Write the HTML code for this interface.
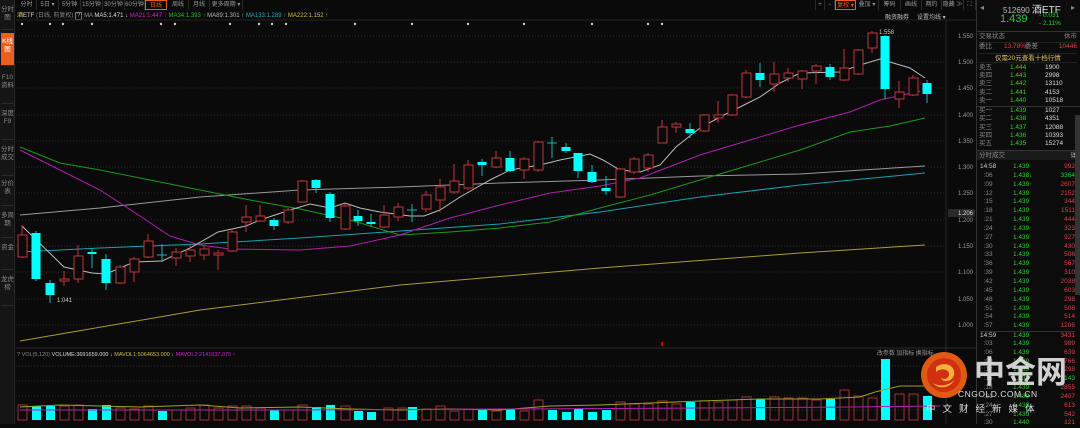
<!DOCTYPE html>
<html><head><meta charset="utf-8"><style>
*{margin:0;padding:0;box-sizing:border-box}
body{width:1080px;height:424px;background:#0a0a0a;overflow:hidden;position:relative;font-family:"Liberation Sans","Noto Sans CJK SC",sans-serif;color:#aaa}
.a{position:absolute;white-space:nowrap}
.t{font-size:6px}
.side{position:absolute;left:0;top:0;width:15px;height:424px;background:#151515;border-right:1px solid #2a2a2a}
.side div{position:absolute;left:1px;width:13px;font-size:6.5px;line-height:8px;text-align:center;color:#888;border-bottom:1px solid #2a2a2a;white-space:normal;word-break:break-all}
.tab{position:absolute;top:0;height:10px;font-size:6px;line-height:10px;color:#999;text-align:center;border-right:1px solid #2a2a2a}
.rp{position:absolute;left:976px;top:0;width:104px;height:424px;background:#0c0c0c;border-left:1px solid #333}
.row{position:absolute;left:2px;width:98px;font-size:6.5px;height:8px;line-height:8px}
.row span{position:absolute}
</style></head><body>
<div class="side">
<div style="top:2px;height:28px;padding-top:4px">分时图</div>
<div style="top:33px;height:33px;background:#e8601c;color:#fff;padding-top:5px">K线图</div>
<div style="top:70px;height:34px;padding-top:4px">F10资料</div>
<div style="top:106px;height:34px;padding-top:4px">深度F9</div>
<div style="top:142px;height:34px;padding-top:4px">分时成交</div>
<div style="top:176px;height:30px;padding-top:4px">分价表</div>
<div style="top:208px;height:30px;padding-top:4px">多周期</div>
<div style="top:240px;height:30px;padding-top:4px">资金</div>
<div style="top:272px;height:34px;padding-top:4px">龙虎榜</div>
</div>
<div class="tab" style="left:17px;width:20px">分时</div>
<div class="tab" style="left:37px;width:22px">5日 ▾</div>
<div class="tab" style="left:59px;width:22px">5分钟</div>
<div class="tab" style="left:81px;width:22px">15分钟</div>
<div class="tab" style="left:103px;width:22px">30分钟</div>
<div class="tab" style="left:125px;width:20px">60分钟</div>
<div class="tab" style="left:145px;width:22px;border:1px solid #e8601c;color:#e8601c">日线</div>
<div class="tab" style="left:168px;width:21px">周线</div>
<div class="tab" style="left:189px;width:21px">月线</div>
<div class="tab" style="left:210px;width:33px">更多周期 ▾</div>
<div class="tab" style="left:815px;width:10px;border-left:1px solid #2a2a2a">+</div>
<div class="tab" style="left:825px;width:10px">−</div>
<div class="tab" style="left:835px;width:21px;border:1px solid #e8601c;color:#e8601c">复权 ▾</div>
<div class="tab" style="left:856px;width:23px">叠加 ▾</div>
<div class="tab" style="left:879px;width:22px">筹码</div>
<div class="tab" style="left:901px;width:21px">画线</div>
<div class="tab" style="left:922px;width:20px">两约</div>
<div class="tab" style="left:942px;width:22px">隐藏 ≫</div>
<div class="tab" style="left:964px;width:12px">⛶</div>
<div class="a t" style="left:17px;top:12px;line-height:8px"><span style="color:#e0c060">酒</span><span style="color:#ddd">ETF</span> <span style="color:#888">(日线, 前复权)</span> <span style="border:1px solid #777;padding:0 1px">?</span> <span style="color:#999">MA</span> <span style="color:#ddd">MA5:1.471 ↓</span> <span style="color:#d020d0">MA21:1.447 ↑</span> <span style="color:#20c020">MA34:1.393 ↑</span> <span style="color:#bbb">MA89:1.301 ↑</span> <span style="color:#20b0c0">MA133:1.289 ↑</span> <span style="color:#d0c040">MA222:1.152 ↑</span></div>
<div class="a t" style="left:885px;top:12px;color:#bbb">融资融券</div>
<div class="a t" style="left:917px;top:12px;color:#bbb">设置均线 ▾</div>

<svg class="a" style="left:0;top:0" width="976" height="424">
<g stroke="#2c2c2c" stroke-dasharray="1 2" stroke-width="1">
<line x1="16" x2="945" y1="36" y2="36"/><line x1="16" x2="945" y1="62" y2="62"/><line x1="16" x2="945" y1="88" y2="88"/><line x1="16" x2="945" y1="115" y2="115"/><line x1="16" x2="945" y1="141" y2="141"/><line x1="16" x2="945" y1="167" y2="167"/><line x1="16" x2="945" y1="193" y2="193"/><line x1="16" x2="945" y1="220" y2="220"/><line x1="16" x2="945" y1="246" y2="246"/><line x1="16" x2="945" y1="272" y2="272"/><line x1="16" x2="945" y1="299" y2="299"/><line x1="16" x2="945" y1="325" y2="325"/>
<line x1="16" x2="945" y1="366" y2="366"/><line x1="16" x2="945" y1="381" y2="381"/><line x1="16" x2="945" y1="396" y2="396"/><line x1="16" x2="945" y1="410" y2="410"/>
</g>
<line x1="946" y1="20" x2="946" y2="424" stroke="#2a2a2a"/>
<line x1="16" y1="348" x2="976" y2="348" stroke="#2a2a2a"/>
<line x1="16" y1="20" x2="976" y2="20" stroke="#222"/>
<g fill="#ccc">
<circle cx="22" cy="24" r="1.2"/><circle cx="50" cy="24" r="1.2"/><circle cx="63" cy="24" r="1.2"/><circle cx="92" cy="24" r="1.2"/><circle cx="161" cy="24" r="1.2"/><circle cx="175" cy="24" r="1.2"/><circle cx="230" cy="24" r="1.2"/><circle cx="259" cy="24" r="1.2"/><circle cx="272" cy="24" r="1.2"/><circle cx="286" cy="24" r="1.2"/><circle cx="355" cy="24" r="1.2"/><circle cx="412" cy="24" r="1.2"/><circle cx="468" cy="24" r="1.2"/><circle cx="524" cy="24" r="1.2"/><circle cx="592" cy="24" r="1.2"/><circle cx="648" cy="24" r="1.2"/><circle cx="662" cy="24" r="1.2"/>
</g>
<g fill="none" stroke-width="1">
<polyline stroke="#d0c040" opacity=".8" points="20,341 200,310 400,285 600,268 800,253 925,245"/>
<polyline stroke="#18a0b0" points="20,252 100,248 200,244 300,238 400,231 500,224 600,212 700,197 800,185 925,173"/>
<polyline stroke="#999" points="20,215 100,208 200,197 300,190 400,187 500,183 600,180 700,176 800,174 925,166"/>
<polyline stroke="#1a9a1a" points="20,147 60,163 100,170 150,180 200,190 250,200 300,209 350,220 400,235 450,232 500,228 550,222 600,208 650,195 700,180 750,165 800,150 850,132 890,126 925,118"/>
<polyline stroke="#b020b0" points="20,150 60,170 100,190 140,216 170,236 200,245 230,249 300,250 350,246 400,235 450,218 500,205 550,193 600,186 640,178 700,155 750,140 800,125 850,112 880,100 920,91"/>
<polyline stroke="#bbb" points="22,226 64,267 92,273 106,274 134,262 162,261 190,248 218,232 246,226 260,220 290,210 310,204 330,208 345,203 360,208 380,212 410,216 424,216 440,210 460,197 490,180 510,170 540,165 560,160 590,154 603,160 620,170 640,172 660,165 676,147 700,128 720,117 740,107 760,97 780,83 800,73 840,72 860,65 880,59 900,65 910,68 925,78"/>
</g>
<g stroke="#c03838" fill="#0a0a0a">
<line x1="22" y1="225" x2="22" y2="258"/><rect x="18" y="235" width="9" height="22"/>
<line x1="64" y1="271" x2="64" y2="286"/><rect x="60" y="279" width="9" height="2"/>
<line x1="78" y1="245" x2="78" y2="283"/><rect x="74" y="256" width="9" height="23"/>
<line x1="120" y1="265" x2="120" y2="284"/><rect x="116" y="267" width="9" height="16"/>
<line x1="134" y1="257" x2="134" y2="282"/><rect x="130" y="259" width="9" height="13"/>
<line x1="148" y1="234" x2="148" y2="258"/><rect x="144" y="241" width="9" height="16"/>
<line x1="176" y1="248" x2="176" y2="266"/><rect x="172" y="252" width="9" height="6"/>
<line x1="190" y1="245" x2="190" y2="262"/><rect x="186" y="250" width="9" height="6"/>
<line x1="204" y1="246" x2="204" y2="260"/><rect x="200" y="249" width="9" height="6"/>
<line x1="218" y1="250" x2="218" y2="270"/><rect x="214" y="253" width="9" height="2"/>
<line x1="232" y1="229" x2="232" y2="252"/><rect x="228" y="232" width="9" height="19"/>
<line x1="246" y1="205" x2="246" y2="232"/><rect x="242" y="217" width="9" height="5"/>
<line x1="260" y1="205" x2="260" y2="222"/><rect x="256" y="216" width="9" height="5"/>
<line x1="288" y1="208" x2="288" y2="224"/><rect x="284" y="210" width="9" height="12"/>
<line x1="302" y1="180" x2="302" y2="202"/><rect x="298" y="181" width="9" height="21"/>
<line x1="345" y1="204" x2="345" y2="230"/><rect x="341" y="206" width="9" height="23"/>
<line x1="384" y1="205" x2="384" y2="228"/><rect x="380" y="215" width="9" height="12"/>
<line x1="398" y1="203" x2="398" y2="221"/><rect x="394" y="207" width="9" height="10"/>
<line x1="426" y1="191" x2="426" y2="212"/><rect x="422" y="195" width="9" height="14"/>
<line x1="440" y1="179" x2="440" y2="212"/><rect x="436" y="187" width="9" height="13"/>
<line x1="454" y1="164" x2="454" y2="194"/><rect x="450" y="181" width="9" height="11"/>
<line x1="468" y1="160" x2="468" y2="190"/><rect x="464" y="165" width="9" height="23"/>
<line x1="496" y1="151" x2="496" y2="168"/><rect x="492" y="158" width="9" height="9"/>
<line x1="524" y1="157" x2="524" y2="179"/><rect x="520" y="159" width="9" height="11"/>
<line x1="538" y1="141" x2="538" y2="172"/><rect x="534" y="142" width="9" height="28"/>
<line x1="620" y1="168" x2="620" y2="198"/><rect x="616" y="169" width="9" height="28"/>
<line x1="634" y1="157" x2="634" y2="174"/><rect x="630" y="159" width="9" height="13"/>
<line x1="648" y1="153" x2="648" y2="172"/><rect x="644" y="155" width="9" height="13"/>
<line x1="662" y1="120" x2="662" y2="143"/><rect x="658" y="127" width="9" height="16"/>
<line x1="676" y1="122" x2="676" y2="133"/><rect x="672" y="124" width="9" height="3"/>
<line x1="704" y1="114" x2="704" y2="132"/><rect x="700" y="115" width="9" height="16"/>
<line x1="718" y1="101" x2="718" y2="123"/><rect x="714" y="115" width="9" height="3"/>
<line x1="732" y1="94" x2="732" y2="116"/><rect x="728" y="95" width="9" height="20"/>
<line x1="746" y1="70" x2="746" y2="98"/><rect x="742" y="73" width="9" height="24"/>
<line x1="774" y1="62" x2="774" y2="92"/><rect x="770" y="74" width="9" height="10"/>
<line x1="788" y1="68" x2="788" y2="82"/><rect x="784" y="73" width="9" height="5"/>
<line x1="802" y1="70" x2="802" y2="89"/><rect x="798" y="71" width="9" height="8"/>
<line x1="816" y1="64" x2="816" y2="84"/><rect x="812" y="66" width="9" height="5"/>
<line x1="844" y1="49" x2="844" y2="81"/><rect x="840" y="68" width="9" height="12"/>
<line x1="858" y1="49" x2="858" y2="75"/><rect x="854" y="50" width="9" height="24"/>
<line x1="872" y1="31" x2="872" y2="53"/><rect x="868" y="33" width="9" height="15"/>
<line x1="899" y1="81" x2="899" y2="108"/><rect x="895" y="92" width="9" height="7"/>
<line x1="913" y1="75" x2="913" y2="96"/><rect x="909" y="78" width="9" height="17"/>
</g>
<g stroke="#10b8b8" fill="#00ffff">
<line x1="36" y1="231" x2="36" y2="281"/><rect x="31.5" y="233" width="9" height="46" stroke="none"/>
<line x1="50" y1="280" x2="50" y2="303"/><rect x="45.5" y="283" width="9" height="12" stroke="none"/>
<line x1="92" y1="248" x2="92" y2="268"/><rect x="87.5" y="252" width="9" height="2" stroke="none"/>
<line x1="106" y1="254" x2="106" y2="290"/><rect x="101.5" y="259" width="9" height="24" stroke="none"/>
<line x1="162" y1="244" x2="162" y2="262"/><line x1="157" y1="255" x2="167" y2="255"/>
<line x1="274" y1="218" x2="274" y2="230"/><rect x="269.5" y="220" width="9" height="6" stroke="none"/>
<line x1="316" y1="179" x2="316" y2="193"/><rect x="311.5" y="180" width="9" height="8" stroke="none"/>
<line x1="330" y1="192" x2="330" y2="222"/><rect x="325.5" y="194" width="9" height="24" stroke="none"/>
<line x1="358" y1="210" x2="358" y2="226"/><rect x="353.5" y="216" width="9" height="5" stroke="none"/>
<line x1="371" y1="214" x2="371" y2="227"/><rect x="366.5" y="222" width="9" height="2" stroke="none"/>
<line x1="412" y1="204" x2="412" y2="222"/><line x1="407" y1="210" x2="417" y2="210"/>
<line x1="482" y1="159" x2="482" y2="176"/><rect x="477.5" y="162" width="9" height="3" stroke="none"/>
<line x1="510" y1="151" x2="510" y2="172"/><rect x="505.5" y="158" width="9" height="13" stroke="none"/>
<line x1="552" y1="137" x2="552" y2="158"/><line x1="547" y1="143" x2="557" y2="143"/>
<line x1="566" y1="143" x2="566" y2="153"/><rect x="561.5" y="147" width="9" height="4" stroke="none"/>
<line x1="578" y1="153" x2="578" y2="178"/><rect x="573.5" y="153" width="9" height="18" stroke="none"/>
<line x1="592" y1="165" x2="592" y2="183"/><rect x="587.5" y="172" width="9" height="10" stroke="none"/>
<line x1="606" y1="176" x2="606" y2="195"/><rect x="601.5" y="188" width="9" height="3" stroke="none"/>
<line x1="690" y1="123" x2="690" y2="138"/><rect x="685.5" y="129" width="9" height="4" stroke="none"/>
<line x1="760" y1="63" x2="760" y2="87"/><rect x="755.5" y="73" width="9" height="7" stroke="none"/>
<line x1="830" y1="64" x2="830" y2="80"/><rect x="825.5" y="67" width="9" height="10" stroke="none"/>
<line x1="885" y1="35" x2="885" y2="99"/><rect x="880.5" y="36" width="9" height="53" stroke="none"/>
<line x1="927" y1="80" x2="927" y2="103"/><rect x="922.5" y="83" width="9" height="11" stroke="none"/>
</g>
<text x="57" y="302" fill="#ccc" font-size="6" font-family="Liberation Sans">1.041</text>
<text x="879" y="34" fill="#ccc" font-size="6" font-family="Liberation Sans">1.558</text>
<g fill="#999" font-size="6" font-family="Liberation Sans">
<text x="958" y="38">1.550</text><text x="958" y="64">1.500</text><text x="958" y="90">1.450</text><text x="958" y="117">1.400</text><text x="958" y="143">1.350</text><text x="958" y="169">1.300</text><text x="958" y="195">1.250</text><text x="958" y="222">1.200</text><text x="958" y="248">1.150</text><text x="958" y="274">1.100</text><text x="958" y="301">1.050</text><text x="958" y="327">1.000</text>
</g>
<rect x="948" y="209" width="27" height="8" fill="#2a2a2a"/><text x="958" y="215" fill="#ddd" font-size="6" font-family="Liberation Sans">1.206</text>
<rect x="661" y="342" width="2" height="4" fill="#c00"/>
<text x="17" y="356" font-size="5.5" font-family="Liberation Sans,Noto Sans CJK SC"><tspan fill="#888">? VOL(5,120)</tspan><tspan fill="#ddd"> VOLUME:3691659.000 ↓</tspan><tspan fill="#d0c040"> MAVOL1:5064653.000 ↓</tspan><tspan fill="#d020d0"> MAVOL2:2141637.075 ↑</tspan></text>
<text x="877" y="355" fill="#999" font-size="6" font-family="Noto Sans CJK SC,sans-serif">改参数  加指标  换指标</text>
<g stroke="#a03030" fill="none">
<rect x="18" y="405" width="9" height="15"/><rect x="60" y="406" width="9" height="14"/><rect x="74" y="405" width="9" height="15"/><rect x="116" y="408" width="9" height="12"/><rect x="130" y="409" width="9" height="11"/><rect x="144" y="406" width="9" height="14"/><rect x="172" y="410" width="9" height="10"/><rect x="186" y="408" width="9" height="12"/><rect x="200" y="405" width="9" height="15"/><rect x="214" y="408" width="9" height="12"/><rect x="228" y="406" width="9" height="14"/><rect x="242" y="406" width="9" height="14"/><rect x="256" y="408" width="9" height="12"/><rect x="284" y="410" width="9" height="10"/><rect x="298" y="405" width="9" height="15"/><rect x="341" y="406" width="9" height="14"/><rect x="384" y="408" width="9" height="12"/><rect x="398" y="408" width="9" height="12"/><rect x="422" y="409" width="9" height="11"/><rect x="436" y="406" width="9" height="14"/><rect x="450" y="411" width="9" height="9"/><rect x="464" y="409" width="9" height="11"/><rect x="492" y="411" width="9" height="9"/><rect x="520" y="411" width="9" height="9"/><rect x="534" y="400" width="9" height="20"/><rect x="616" y="402" width="9" height="18"/><rect x="630" y="404" width="9" height="16"/><rect x="644" y="404" width="9" height="16"/><rect x="658" y="401" width="9" height="19"/><rect x="672" y="404" width="9" height="16"/><rect x="700" y="401" width="9" height="19"/><rect x="714" y="402" width="9" height="18"/><rect x="728" y="400" width="9" height="20"/><rect x="742" y="397" width="9" height="23"/><rect x="770" y="397" width="9" height="23"/><rect x="784" y="398" width="9" height="22"/><rect x="798" y="398" width="9" height="22"/><rect x="812" y="400" width="9" height="20"/><rect x="840" y="390" width="9" height="30"/><rect x="854" y="396" width="9" height="24"/><rect x="868" y="398" width="9" height="22"/><rect x="895" y="394" width="9" height="26"/><rect x="909" y="394" width="9" height="26"/>
</g>
<g fill="#00ffff">
<rect x="32" y="406" width="9" height="14"/><rect x="46" y="406" width="9" height="14"/><rect x="88" y="409" width="9" height="11"/><rect x="102" y="405" width="9" height="15"/><rect x="158" y="411" width="9" height="9"/><rect x="270" y="410" width="9" height="10"/><rect x="312" y="407" width="9" height="13"/><rect x="326" y="405" width="9" height="15"/><rect x="354" y="411" width="9" height="9"/><rect x="367" y="412" width="9" height="8"/><rect x="408" y="407" width="9" height="13"/><rect x="478" y="410" width="9" height="10"/><rect x="506" y="409" width="9" height="11"/><rect x="548" y="410" width="9" height="10"/><rect x="562" y="412" width="9" height="8"/><rect x="574" y="409" width="9" height="11"/><rect x="588" y="412" width="9" height="8"/><rect x="602" y="410" width="9" height="10"/><rect x="686" y="402" width="9" height="18"/><rect x="756" y="399" width="9" height="21"/><rect x="826" y="399" width="9" height="21"/><rect x="881" y="359" width="9" height="61"/><rect x="923" y="396" width="9" height="24"/>
</g>
<polyline fill="none" stroke="#a0a020" points="20,407 60,405 100,406 140,407 200,405 240,408 300,407 350,409 400,410 450,409 500,410 550,406 600,405 650,403 700,401 760,399 820,399 860,397 875,392 900,386 940,386"/>
<polyline fill="none" stroke="#b020b0" points="20,410 300,410 500,409 700,408 850,407 940,406"/>
</svg>

<div class="rp">
<div class="a t" style="left:3px;top:3px;color:#888;font-size:8px">◂</div>
<div class="a" style="left:26px;top:1px;font-size:8px;color:#bbb">512690 <span style="color:#e0e0e0;font-size:10px">酒ETF</span></div>
<div class="a t" style="left:94px;top:3px;color:#888;font-size:8px">▸</div>
<div class="a" style="left:23px;top:13px;font-size:11px;color:#2fd02f">1.439</div>
<div class="a" style="left:62px;top:12px;font-size:6.5px;line-height:8px;color:#2fd02f">- 0.031<br>- 2.11%</div>
<div style="position:absolute;left:0;top:31px;width:104px;height:1px;background:#333"></div>
<div class="row" style="top:33px;color:#888"><span style="left:0">交易状态</span><span style="right:0">休市</span></div>
<div class="row" style="top:42px;color:#888;border-top:1px solid #222"><span style="left:0">委比</span><span style="left:25px;color:#e04040">13.78%</span><span style="left:46px">委差</span><span style="right:0;color:#e04040">10446</span></div>
<div class="row" style="top:53px;color:#e0c060;text-decoration:underline;text-align:center;border-top:1px solid #222;border-bottom:1px solid #222;height:10px;line-height:10px"><span style="left:16px">仅需20元查看十档行情</span></div>
<div class="row" style="top:64px;color:#888"><span style="left:0">卖五</span><span style="left:31px;color:#2fd02f">1.444</span><span style="left:66px;color:#ddd">1900</span></div>
<div class="row" style="top:72px;color:#888"><span style="left:0">卖四</span><span style="left:31px;color:#2fd02f">1.443</span><span style="left:66px;color:#ddd">2998</span></div>
<div class="row" style="top:80px;color:#888"><span style="left:0">卖三</span><span style="left:31px;color:#2fd02f">1.442</span><span style="left:66px;color:#ddd">13110</span></div>
<div class="row" style="top:89px;color:#888"><span style="left:0">卖二</span><span style="left:31px;color:#2fd02f">1.441</span><span style="left:66px;color:#ddd">4153</span></div>
<div class="row" style="top:97px;color:#888"><span style="left:0">卖一</span><span style="left:31px;color:#2fd02f">1.440</span><span style="left:66px;color:#ddd">10518</span></div>
<div style="position:absolute;left:0;top:106px;width:104px;height:1px;background:#333"></div>
<div class="row" style="top:107px;color:#888"><span style="left:0">买一</span><span style="left:31px;color:#2fd02f">1.439</span><span style="left:66px;color:#ddd">1027</span></div>
<div class="row" style="top:115px;color:#888"><span style="left:0">买二</span><span style="left:31px;color:#2fd02f">1.438</span><span style="left:66px;color:#ddd">4351</span></div>
<div class="row" style="top:124px;color:#888"><span style="left:0">买三</span><span style="left:31px;color:#2fd02f">1.437</span><span style="left:66px;color:#ddd">12088</span></div>
<div class="row" style="top:132px;color:#888"><span style="left:0">买四</span><span style="left:31px;color:#2fd02f">1.436</span><span style="left:66px;color:#ddd">10393</span></div>
<div class="row" style="top:140px;color:#888"><span style="left:0">买五</span><span style="left:31px;color:#2fd02f">1.435</span><span style="left:66px;color:#ddd">15274</span></div>
<div class="row" style="top:150px;color:#888;background:#1a1a1a;height:10px;line-height:10px;left:0;width:104px;border-top:1px solid #333"><span style="left:2px">分时成交</span><span style="right:4px;color:#ccc">详</span></div>
<div style="position:absolute;left:98px;top:115px;width:5px;height:180px;background:#333"></div>
</div>
<div class="a" style="left:980px;top:163px;width:95px;font-size:6.5px;line-height:8.85px;color:#888">
<div style="position:relative;height:8.85px"><span style="color:#ccc">14:58</span><span style="position:absolute;left:33px;color:#2fd02f">1.439</span><span style="position:absolute;right:0;color:#e04040">992</span></div>
<div style="position:relative;height:8.85px">&nbsp;&nbsp;:06<span style="position:absolute;left:33px;color:#2fd02f">1.438↓</span><span style="position:absolute;right:0;color:#2fd02f">3364</span></div>
<div style="position:relative;height:8.85px">&nbsp;&nbsp;:09<span style="position:absolute;left:33px;color:#2fd02f">1.439<span style="color:#e04040">↑</span></span><span style="position:absolute;right:0;color:#e04040">2607</span></div>
<div style="position:relative;height:8.85px">&nbsp;&nbsp;:12<span style="position:absolute;left:33px;color:#2fd02f">1.439</span><span style="position:absolute;right:0;color:#e04040">2152</span></div>
<div style="position:relative;height:8.85px">&nbsp;&nbsp;:15<span style="position:absolute;left:33px;color:#2fd02f">1.439</span><span style="position:absolute;right:0;color:#e04040">344</span></div>
<div style="position:relative;height:8.85px">&nbsp;&nbsp;:18<span style="position:absolute;left:33px;color:#2fd02f">1.439</span><span style="position:absolute;right:0;color:#e04040">1511</span></div>
<div style="position:relative;height:8.85px">&nbsp;&nbsp;:21<span style="position:absolute;left:33px;color:#2fd02f">1.439</span><span style="position:absolute;right:0;color:#e04040">444</span></div>
<div style="position:relative;height:8.85px">&nbsp;&nbsp;:24<span style="position:absolute;left:33px;color:#2fd02f">1.439</span><span style="position:absolute;right:0;color:#e04040">323</span></div>
<div style="position:relative;height:8.85px">&nbsp;&nbsp;:27<span style="position:absolute;left:33px;color:#2fd02f">1.439</span><span style="position:absolute;right:0;color:#e04040">927</span></div>
<div style="position:relative;height:8.85px">&nbsp;&nbsp;:30<span style="position:absolute;left:33px;color:#2fd02f">1.439</span><span style="position:absolute;right:0;color:#e04040">430</span></div>
<div style="position:relative;height:8.85px">&nbsp;&nbsp;:33<span style="position:absolute;left:33px;color:#2fd02f">1.439</span><span style="position:absolute;right:0;color:#e04040">506</span></div>
<div style="position:relative;height:8.85px">&nbsp;&nbsp;:36<span style="position:absolute;left:33px;color:#2fd02f">1.439</span><span style="position:absolute;right:0;color:#e04040">567</span></div>
<div style="position:relative;height:8.85px">&nbsp;&nbsp;:39<span style="position:absolute;left:33px;color:#2fd02f">1.439</span><span style="position:absolute;right:0;color:#e04040">310</span></div>
<div style="position:relative;height:8.85px">&nbsp;&nbsp;:42<span style="position:absolute;left:33px;color:#2fd02f">1.439</span><span style="position:absolute;right:0;color:#e04040">2038</span></div>
<div style="position:relative;height:8.85px">&nbsp;&nbsp;:45<span style="position:absolute;left:33px;color:#2fd02f">1.439</span><span style="position:absolute;right:0;color:#e04040">603</span></div>
<div style="position:relative;height:8.85px">&nbsp;&nbsp;:48<span style="position:absolute;left:33px;color:#2fd02f">1.439</span><span style="position:absolute;right:0;color:#e04040">298</span></div>
<div style="position:relative;height:8.85px">&nbsp;&nbsp;:51<span style="position:absolute;left:33px;color:#2fd02f">1.439</span><span style="position:absolute;right:0;color:#e04040">508</span></div>
<div style="position:relative;height:8.85px">&nbsp;&nbsp;:54<span style="position:absolute;left:33px;color:#2fd02f">1.439</span><span style="position:absolute;right:0;color:#e04040">514</span></div>
<div style="position:relative;height:8.85px">&nbsp;&nbsp;:57<span style="position:absolute;left:33px;color:#2fd02f">1.439</span><span style="position:absolute;right:0;color:#e04040">1206</span></div>
<div style="position:relative;height:8.85px;border-top:1px solid #333"><span style="color:#ccc">14:59</span><span style="position:absolute;left:33px;color:#2fd02f">1.439</span><span style="position:absolute;right:0;color:#e04040">3431</span></div>
<div style="position:relative;height:8.85px">&nbsp;&nbsp;:03<span style="position:absolute;left:33px;color:#2fd02f">1.439</span><span style="position:absolute;right:0;color:#e04040">989</span></div>
<div style="position:relative;height:8.85px">&nbsp;&nbsp;:06<span style="position:absolute;left:33px;color:#2fd02f">1.439</span><span style="position:absolute;right:0;color:#e04040">639</span></div>
<div style="position:relative;height:8.85px">&nbsp;&nbsp;:09<span style="position:absolute;left:33px;color:#2fd02f">1.439</span><span style="position:absolute;right:0;color:#e04040">766</span></div>
<div style="position:relative;height:8.85px">&nbsp;&nbsp;:12<span style="position:absolute;left:33px;color:#2fd02f">1.439</span><span style="position:absolute;right:0;color:#e04040">298</span></div>
<div style="position:relative;height:8.85px">&nbsp;&nbsp;:15<span style="position:absolute;left:33px;color:#2fd02f">1.438</span><span style="position:absolute;right:0;color:#2fd02f">143</span></div>
<div style="position:relative;height:8.85px">&nbsp;&nbsp;:18<span style="position:absolute;left:33px;color:#2fd02f">1.439</span><span style="position:absolute;right:0;color:#e04040">2855</span></div>
<div style="position:relative;height:8.85px">&nbsp;&nbsp;:21<span style="position:absolute;left:33px;color:#2fd02f">1.439</span><span style="position:absolute;right:0;color:#e04040">2407</span></div>
<div style="position:relative;height:8.85px">&nbsp;&nbsp;:24<span style="position:absolute;left:33px;color:#2fd02f">1.439</span><span style="position:absolute;right:0;color:#e04040">613</span></div>
<div style="position:relative;height:8.85px">&nbsp;&nbsp;:27<span style="position:absolute;left:33px;color:#2fd02f">1.439</span><span style="position:absolute;right:0;color:#e04040">542</span></div>
<div style="position:relative;height:8.85px">&nbsp;&nbsp;:30<span style="position:absolute;left:33px;color:#2fd02f">1.440</span><span style="position:absolute;right:0;color:#e04040">121</span></div>
</div>
<svg class="a" style="left:920px;top:351px" width="48" height="48"><circle cx="24" cy="24" r="23" fill="#e05a14"/><circle cx="24" cy="24" r="17" fill="#d03010"/><path d="M16 16c8-6 20-2 18 8-2 7-11 8-13 3 3 2 7 1 8-3 1-5-7-8-13-3z M13 32c6 4 16 3 21-3-3 8-16 10-21 3z" fill="#f5b040"/></svg>
<div class="a" style="left:974px;top:352px;font-size:31px;line-height:36px;color:#e6e6e6;font-family:'Noto Sans CJK SC',sans-serif;font-weight:bold;opacity:.9">中金网</div>
<div class="a" style="left:958px;top:389px;font-size:8.5px;color:#ddd;letter-spacing:.5px">CNGOLD.COM.CN</div>
<div class="a" style="left:926px;top:401px;font-size:9.5px;color:#ddd;letter-spacing:7px;font-family:'Noto Sans CJK SC',sans-serif">中文财经新媒体</div>
</body></html>
